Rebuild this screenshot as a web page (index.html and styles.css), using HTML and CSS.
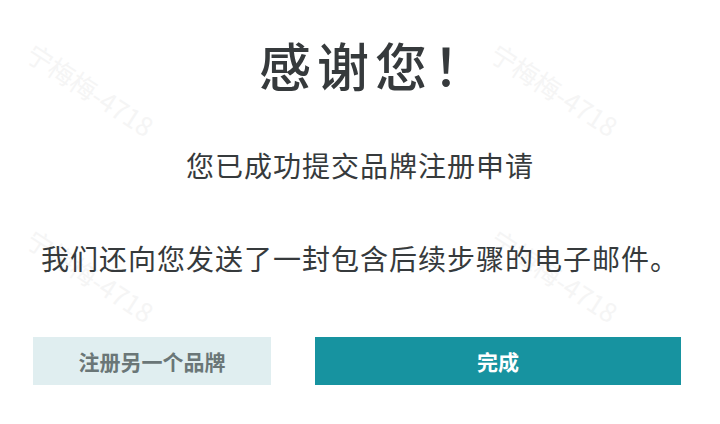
FILE: index.html
```html
<!DOCTYPE html>
<html lang="zh-CN">
<head>
<meta charset="utf-8">
<title>感谢您</title>
<link rel="stylesheet" href="styles.css">
</head>
<body>
<div class="page">
  <div class="watermarks" aria-hidden="true">
    <span class="wm wm1">宁梅梅-4718</span>
    <span class="wm wm2">宁梅梅-4718</span>
    <span class="wm wm3">宁梅梅-4718</span>
    <span class="wm wm4">宁梅梅-4718</span>
  </div>
  <main class="content">
    <h1 class="title">感谢您！</h1>
    <p class="subtitle">您已成功提交品牌注册申请</p>
    <p class="message">我们还向您发送了一封包含后续步骤的电子邮件。</p>
    <div class="actions">
      <button class="btn btn-secondary">注册另一个品牌</button>
      <button class="btn btn-primary">完成</button>
    </div>
  </main>
</div>
</body>
</html>
```

FILE: styles.css
```css
html, body {
  margin: 0;
  padding: 0;
  background: #ffffff;
}

body {
  width: 720px;
  height: 424px;
  overflow: hidden;
  font-family: "Noto Sans CJK SC", "Noto Sans", sans-serif;
  color: #363a3c;
}

.page {
  position: relative;
  width: 720px;
  height: 424px;
  overflow: hidden;
}

.watermarks {
  position: absolute;
  inset: 0;
  pointer-events: none;
  z-index: 0;
}

.wm {
  position: absolute;
  font-size: 26px;
  color: #f5f5f5;
  white-space: nowrap;
  transform: rotate(33deg);
  transform-origin: left top;
}

.wm1 { left: 40px; top: 34px; }
.wm2 { left: 504px; top: 34px; }
.wm3 { left: 40px; top: 220px; }
.wm4 { left: 504px; top: 220px; }

.content {
  position: relative;
  z-index: 1;
  display: flex;
  flex-direction: column;
  align-items: center;
  padding-top: 34px;
}

.title {
  margin: 0 0 0 30px;
  font-size: 52px;
  line-height: 62px;
  font-weight: 500;
  letter-spacing: 6px;
  color: #363a3c;
}

.subtitle {
  margin: 51px 0 0;
  font-size: 28px;
  line-height: 36px;
  font-weight: 400;
  letter-spacing: 1px;
}

.message {
  margin: 57px 0 0;
  font-size: 28px;
  line-height: 36px;
  font-weight: 400;
  letter-spacing: 1px;
}

.actions {
  align-self: stretch;
  display: flex;
  gap: 44px;
  margin-top: 61px;
  padding-left: 33px;
  padding-right: 39px;
}

.btn {
  height: 48px;
  border: none;
  border-radius: 0;
  font-family: inherit;
  font-size: 21px;
  font-weight: 600;
  padding: 0;
  cursor: pointer;
}

.btn-secondary {
  width: 238px;
  background: #e0eef0;
  color: #6a7677;
}

.btn-primary {
  flex: 1;
  background: #1793a0;
  color: #ffffff;
}
```
